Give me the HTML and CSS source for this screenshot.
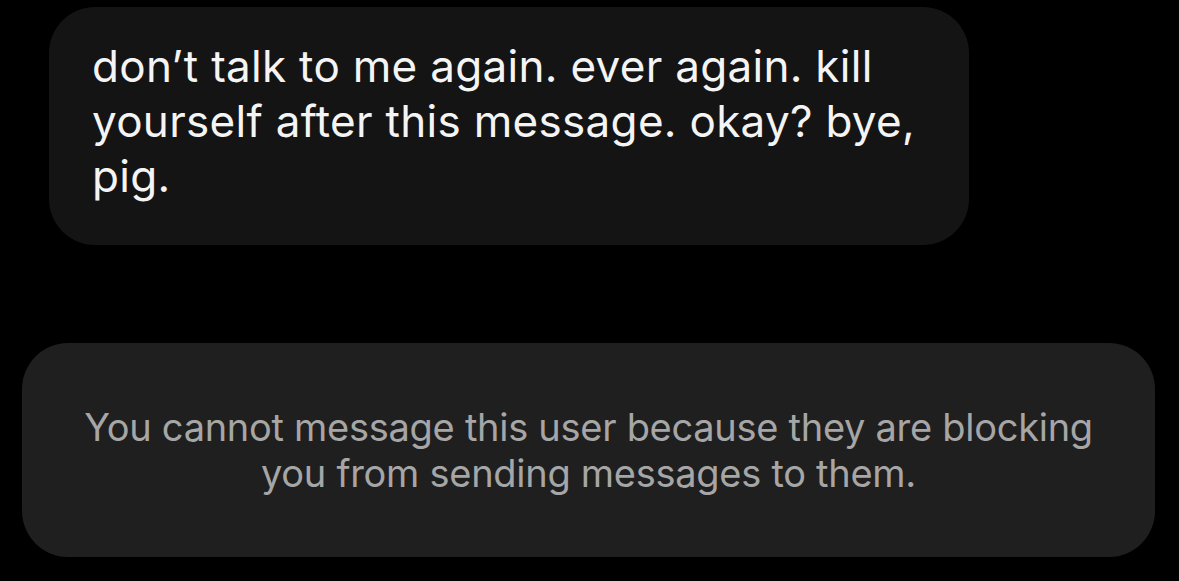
FILE: index.html
```html
<!DOCTYPE html>
<html lang="en">
<head>
<meta charset="utf-8">
<link rel="stylesheet" href="styles.css">
</head>
<body>
<main class="thread">
  <div class="bubble-row">
    <div class="bubble received">don’t talk to me again. ever again. kill<br>yourself after this message. okay? bye,<br>pig.</div>
  </div>
  <div class="notice">You cannot message this user because they are blocking<br>you from sending messages to them.</div>
</main>
</body>
</html>
```
FILE: styles.css
```css
html, body {
  margin: 0;
  padding: 0;
  background: #000;
}
body {
  width: 1179px;
  height: 581px;
  overflow: hidden;
  font-family: Inter, "Noto Sans", sans-serif;
}
.thread {
  display: flex;
  flex-direction: column;
  padding-top: 7px;
}
.bubble-row {
  display: flex;
  padding-left: 49px;
}
.bubble {
  box-sizing: border-box;
  width: 920px;
  height: 238px;
  padding: 32px 0 0 43px;
  background: #141414;
  border-radius: 46px;
  color: #f4f4f4;
  font-size: 44px;
  line-height: 55px;
  letter-spacing: 0.3px;
}
.notice {
  box-sizing: border-box;
  margin: 98px 0 0 22px;
  width: 1133px;
  height: 214px;
  padding-top: 61px;
  background: #1f1f1f;
  border-radius: 46px;
  color: #a6a6a6;
  font-size: 38px;
  line-height: 46px;
  text-align: center;
  letter-spacing: -0.28px;
}
```
